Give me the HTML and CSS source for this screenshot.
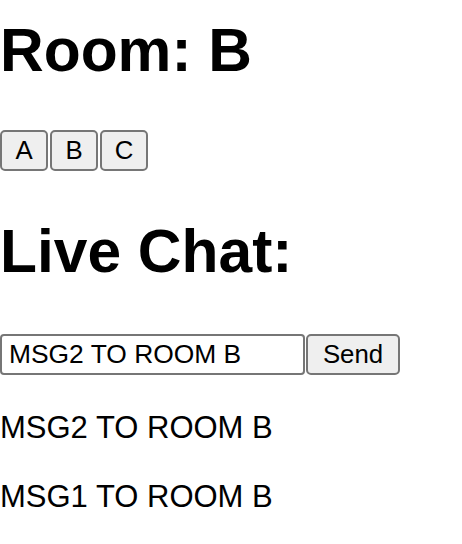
FILE: index.html
```html
<!DOCTYPE html>
<html>
<head>
<meta charset="utf-8">
<link rel="stylesheet" href="styles.css">
</head>
<body>
<h1 class="title">Room: B</h1>
<div class="rooms">
  <button class="btn room">A</button>
  <button class="btn room">B</button>
  <button class="btn room">C</button>
</div>
<h1 class="title chat-title">Live Chat:</h1>
<form class="composer">
  <input class="msg-input" type="text" value="MSG2 TO ROOM B">
  <button class="btn send" type="button">Send</button>
</form>
<div class="messages">
  <p class="msg">MSG2 TO ROOM B</p>
  <p class="msg">MSG1 TO ROOM B</p>
</div>
</body>
</html>
```
FILE: styles.css
```css
html, body {
  margin: 0;
  padding: 0;
  background: #fff;
}
body {
  font-family: "Liberation Sans", Arial, sans-serif;
  color: #000;
}
.title {
  font-size: 60.5px;
  line-height: 70px;
  font-weight: bold;
  margin: 15px 0 45px;
}
.chat-title {
  margin: 45px 0 48px;
}
.rooms {
  display: flex;
  gap: 2px;
}
.btn {
  font-family: "Liberation Sans", Arial, sans-serif;
  font-size: 25.8px;
  color: #000;
  background: #efefef;
  border: 2px solid #767676;
  border-radius: 5px;
  height: 41px;
  padding: 0;
  margin: 0;
  box-sizing: border-box;
}
.room {
  width: 48px;
}
.composer {
  display: flex;
  gap: 1px;
  margin: 0;
}
.msg-input {
  width: 305px;
  height: 41px;
  box-sizing: border-box;
  border: 2px solid #767676;
  border-radius: 4px;
  padding: 0 7px;
  margin: 0;
  font-family: "Liberation Sans", Arial, sans-serif;
  font-size: 26.4px;
  color: #000;
}
.send {
  width: 94px;
}
.messages {
  display: flex;
  flex-direction: column;
  gap: 34px;
  margin-top: 35px;
}
.msg {
  margin: 0;
  font-size: 31px;
  line-height: 35px;
}
```
